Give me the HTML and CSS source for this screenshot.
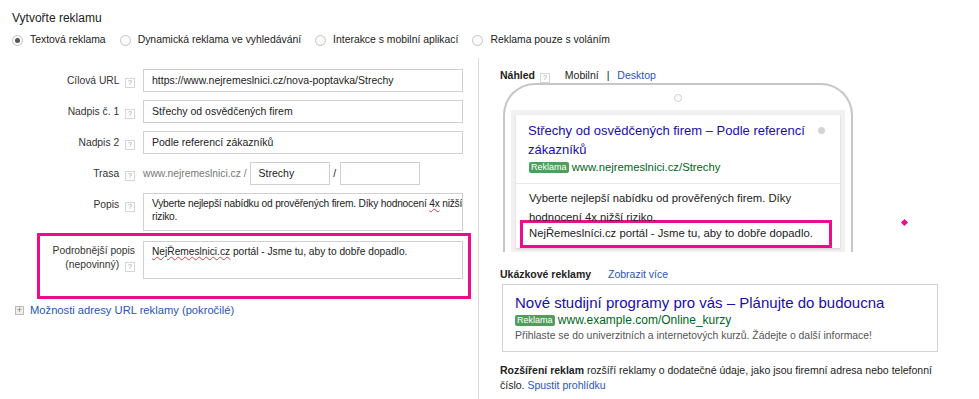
FILE: index.html
```html
<!DOCTYPE html>
<html lang="cs">

<head>
    <meta charset="UTF-8">
    <title>Vytvořte reklamu</title>
    <link rel="stylesheet" href="styles.css">
</head>

<body>
    <div class="page">
        <h1 class="page-title">Vytvořte reklamu</h1>
        <div class="ad-types">
            <label class="radio"><span class="radio-dot checked"></span>Textová reklama</label>
            <label class="radio"><span class="radio-dot"></span>Dynamická reklama ve vyhledávání</label>
            <label class="radio"><span class="radio-dot"></span>Interakce s mobilní aplikací</label>
            <label class="radio"><span class="radio-dot"></span>Reklama pouze s voláním</label>
        </div>

        <div class="columns">
            <!-- Form -->
            <section class="editor">
                <div class="row">
                    <div class="row-label">Cílová URL <span class="help">?</span></div>
                    <div class="field">https://www.nejremeslnici.cz/nova-poptavka/Strechy</div>
                </div>
                <div class="row">
                    <div class="row-label">Nadpis č. 1 <span class="help">?</span></div>
                    <div class="field">Střechy od osvědčených firem</div>
                </div>
                <div class="row">
                    <div class="row-label">Nadpis 2 <span class="help">?</span></div>
                    <div class="field">Podle referencí zákazníků</div>
                </div>
                <div class="row">
                    <div class="row-label">Trasa <span class="help">?</span></div>
                    <div class="path">
                        <span class="path-domain">www.nejremeslnici.cz /</span>
                        <div class="field path-field">Strechy</div>
                        <span class="path-sep">/</span>
                        <div class="field path-field"></div>
                    </div>
                </div>
                <div class="row">
                    <div class="row-label top">Popis <span class="help">?</span></div>
                    <div class="field area tight">Vyberte nejlepší nabídku od prověřených firem. Díky hodnocení <span class="typo">4x</span> nižší<br>riziko.</div>
                </div>
                <div class="row highlight">
                    <div class="row-label top">Podrobnější popis<br>(nepovinný) <span class="help">?</span></div>
                    <div class="field area"><span class="typo">NejŘemeslnici.cz</span> portál - Jsme tu, aby to dobře dopadlo.</div>
                </div>
                <a class="more-link" href="#"><span class="plus">+</span>Možnosti adresy URL reklamy (pokročilé)</a>
            </section>

            <!-- Preview -->
            <section class="preview">
                <div class="preview-head">
                    <b>Náhled</b> <span class="help">?</span>
                    <span class="device">Mobilní</span>
                    <span class="bar">|</span>
                    <a href="#">Desktop</a>
                </div>
                <div class="phone">
                    <div class="camera"></div>
                    <div class="screen">
                        <div class="ad-card">
                            <div class="ad-top">
                                <div class="ad-title">Střechy od osvědčených firem – Podle referencí<br>zákazníků</div>
                                <span class="info-dot"></span>
                            </div>
                            <div class="ad-url"><span class="badge">Reklama</span> www.nejremeslnici.cz/Strechy</div>
                            <div class="ad-desc">
                                Vyberte nejlepší nabídku od prověřených firem. Díky<br>
                                hodnocení 4x nižší riziko.
                                <div class="ad-extra">NejŘemeslníci.cz portál - Jsme tu, aby to dobře dopadlo.</div>
                            </div>
                        </div>
                    </div>
                </div>

                <div class="samples-head">
                    <b>Ukázkové reklamy</b>
                    <a href="#">Zobrazit více</a>
                </div>
                <div class="sample">
                    <div class="sample-title">Nové studijní programy pro vás – Plánujte do budoucna</div>
                    <div class="sample-url"><span class="badge">Reklama</span> www.example.com/Online_kurzy</div>
                    <div class="sample-desc">Přihlaste se do univerzitních a internetových kurzů. Žádejte o další informace!</div>
                </div>

                <p class="extensions"><b>Rozšíření reklam</b> rozšíří reklamy o dodatečné údaje, jako jsou firemní adresa nebo telefonní číslo. <a href="#">Spustit prohlídku</a></p>
            </section>
        </div>
        <span class="marker"></span>
    </div>
</body>

</html>
```

FILE: styles.css
```css
body {
    margin: 0;
    font-family: "Liberation Sans", Arial, sans-serif;
    color: #222;
    background: #fff;
}

a {
    color: #2a55b8;
    text-decoration: none;
}

.page {
    position: relative;
    width: 979px;
    height: 399px;
    overflow: hidden;
}

.page-title {
    margin: 9px 0 0 12px;
    font-size: 12px;
    font-weight: normal;
    line-height: 18px;
}

.ad-types {
    display: flex;
    margin: 5px 0 0 12px;
    font-size: 10.4px;
    line-height: 16px;
}

.radio {
    display: flex;
    align-items: center;
    margin-right: 14px;
}

.radio-dot {
    width: 11px;
    height: 11px;
    border: 1px solid #c4c4c4;
    border-radius: 50%;
    margin-right: 7px;
    box-sizing: border-box;
    display: flex;
    align-items: center;
    justify-content: center;
    background: #fafafa;
}

.radio-dot.checked::after {
    content: "";
    width: 5px;
    height: 5px;
    border-radius: 50%;
    background: #555;
}

.columns {
    display: flex;
    margin-top: 10px;
    height: 341px;
}

/* Form */
.editor {
    width: 478px;
    padding-top: 11px;
    box-sizing: border-box;
}

.row {
    display: grid;
    grid-template-columns: 135px 320px;
    column-gap: 8px;
    margin-bottom: 8px;
    font-size: 10.3px;
}

.row-label {
    text-align: right;
    align-self: center;
    color: #333;
    line-height: 14px;
}

.row-label.top {
    align-self: start;
    padding-top: 5px;
}

.help {
    display: inline-block;
    width: 10px;
    height: 10px;
    border: 1px solid #d6d6d6;
    box-sizing: border-box;
    font-size: 7px;
    line-height: 8px;
    text-align: center;
    color: #999;
    vertical-align: -1px;
    margin-left: 3px;
    font-weight: normal;
}

.field {
    height: 23px;
    border: 1px solid #d0d0d0;
    box-sizing: border-box;
    padding: 0 8px;
    line-height: 21px;
    font-size: 10.5px;
    color: #222;
    white-space: nowrap;
    overflow: hidden;
}

.field.area {
    height: 38px;
    white-space: normal;
    font-size: 10.2px;
    line-height: 13px;
    padding: 3px 4px 0 8px;
}

.field.area.tight {
    white-space: nowrap;
    letter-spacing: -0.2px;
}

.typo {
    text-decoration: underline wavy #e04040;
    text-decoration-thickness: 1px;
}

.path {
    display: flex;
    align-items: center;
}

.path-domain {
    color: #777;
    margin-right: 3px;
    white-space: nowrap;
}

.path-field {
    width: 80px;
}

.path-sep {
    width: 10px;
    text-align: center;
}

.row.highlight {
    margin: -6px 0 0 37px;
    width: 434px;
    box-sizing: border-box;
    grid-template-columns: 95px 320px;
    border: 3px solid #ec0c8c;
    padding: 5px 5px 17px 0;
}

.row.highlight .row-label.top {
    padding-top: 3px;
}

.more-link {
    display: flex;
    align-items: center;
    margin: 3px 0 0 15px;
    font-size: 11.2px;
    line-height: 16px;
}

.plus {
    width: 9px;
    height: 9px;
    border: 1px solid #bbb;
    box-sizing: border-box;
    background: #eee;
    color: #777;
    font-size: 9px;
    line-height: 7px;
    text-align: center;
    margin-right: 6px;
}

/* Preview */
.preview {
    border-left: 1px solid #dcdcdc;
    padding: 9px 0 0 21px;
    flex: 1;
    font-size: 10.5px;
}

.preview-head {
    line-height: 16px;
    height: 16px;
}

.preview-head .help {
    margin-left: 2px;
    margin-right: 12px;
}

.device {
    color: #222;
}

.bar {
    margin: 0 5px;
}

.phone {
    margin-left: 3px;
    width: 350px;
    height: 169px;
    border: 2px solid #c6c6c6;
    border-bottom: none;
    border-radius: 32px 32px 0 0;
    box-sizing: border-box;
    padding-top: 9px;
}

.camera {
    width: 8px;
    height: 8px;
    margin: 0 auto;
    border: 1px solid #cfcfcf;
    border-radius: 50%;
    box-sizing: border-box;
}

.screen {
    margin: 8px 6px 0;
    height: 142px;
    background: #f1f1f1;
    padding: 5px 5px 0;
    box-sizing: border-box;
}

.ad-card {
    background: #fff;
    height: 133px;
    overflow: hidden;
    box-shadow: 0 1px 2px rgba(0, 0, 0, 0.15);
}

.ad-top {
    display: flex;
    justify-content: space-between;
    padding: 6px 15px 0 12px;
}

.ad-title {
    font-size: 13px;
    line-height: 19px;
    color: #1a0dab;
}

.info-dot {
    width: 7px;
    height: 7px;
    border-radius: 50%;
    background: #d4d4d4;
    margin-top: 6px;
}

.ad-url {
    padding: 0 12px 8px 13px;
    font-size: 11.3px;
    line-height: 16px;
    color: #006621;
    border-bottom: 1px solid #e8e8e8;
}

.badge {
    display: inline-block;
    background: #4f9f5c;
    color: #fff;
    font-size: 9px;
    line-height: 11px;
    padding: 0 2px;
    border-radius: 2px;
    vertical-align: 1px;
}

.ad-desc {
    padding: 5px 8px 0 13px;
    font-size: 11.3px;
    line-height: 18.5px;
}

.ad-extra {
    margin: -6px 0 0 -9px;
    border: 3px solid #ec0c8c;
    padding: 1px 0 2px 6px;
    line-height: 19px;
    white-space: nowrap;
}

.samples-head {
    margin-top: 14px;
    line-height: 16px;
}

.samples-head a {
    margin-left: 14px;
}

.sample {
    margin: 2px 0 0 2px;
    width: 436px;
    height: 68px;
    border: 1px solid #d2d2d2;
    box-sizing: border-box;
    padding: 8px 12px 0;
}

.sample-title {
    font-size: 15px;
    line-height: 20px;
    color: #1a0dab;
}

.sample-url {
    font-size: 12px;
    line-height: 15px;
    color: #006621;
}

.sample-desc {
    font-size: 10.4px;
    line-height: 16px;
    color: #555;
}

.extensions {
    margin: 11px 0 0;
    font-size: 10.5px;
    line-height: 14.5px;
    width: 440px;
}

.marker {
    position: absolute;
    left: 902px;
    top: 220px;
    width: 5px;
    height: 5px;
    background: #ec0c8c;
    transform: rotate(45deg);
}
```
